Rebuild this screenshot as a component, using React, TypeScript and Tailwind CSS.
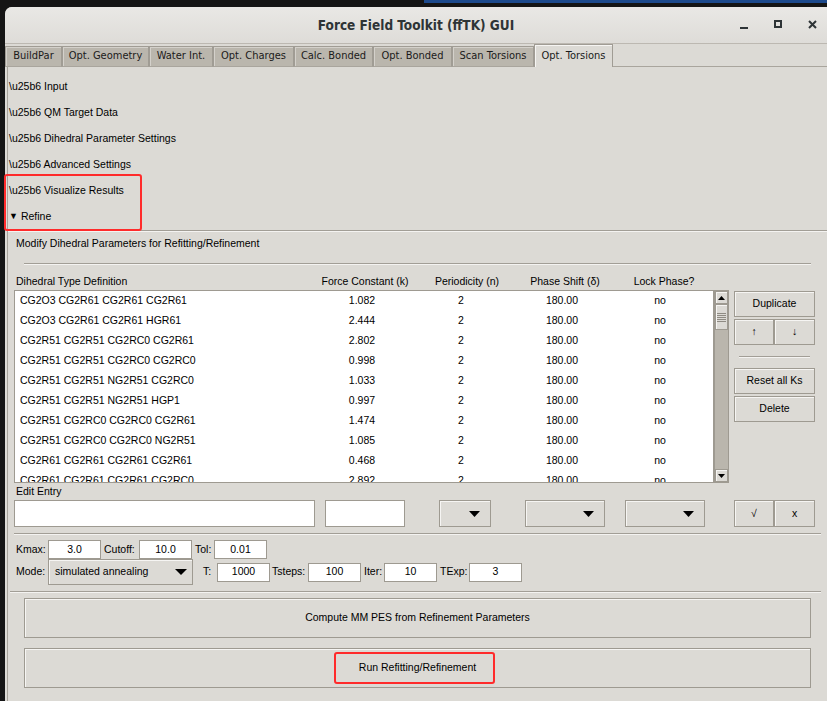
import React from 'react';

const rows: [string, string][] = [
  ['CG2O3 CG2R61 CG2R61 CG2R61', '1.082'],
  ['CG2O3 CG2R61 CG2R61 HGR61', '2.444'],
  ['CG2R51 CG2R51 CG2RC0 CG2R61', '2.802'],
  ['CG2R51 CG2R51 CG2RC0 CG2RC0', '0.998'],
  ['CG2R51 CG2R51 NG2R51 CG2RC0', '1.033'],
  ['CG2R51 CG2R51 NG2R51 HGP1', '0.997'],
  ['CG2R51 CG2RC0 CG2RC0 CG2R61', '1.474'],
  ['CG2R51 CG2RC0 CG2RC0 NG2R51', '1.085'],
  ['CG2R61 CG2R61 CG2R61 CG2R61', '0.468'],
  ['CG2R61 CG2R61 CG2R61 CG2RC0', '2.892'],
];

const tabs = [
  { label: 'BuildPar', w: 'w-[57px]' },
  { label: 'Opt. Geometry', w: 'w-[87px]' },
  { label: 'Water Int.', w: 'w-[64px]' },
  { label: 'Opt. Charges', w: 'w-[81px]' },
  { label: 'Calc. Bonded', w: 'w-[79px]' },
  { label: 'Opt. Bonded', w: 'w-[79px]' },
  { label: 'Scan Torsions', w: 'w-[82px]' },
];

const sections = [
  '\\u25b6 Input',
  '\\u25b6 QM Target Data',
  '\\u25b6 Dihedral Parameter Settings',
  '\\u25b6 Advanced Settings',
  '\\u25b6 Visualize Results',
];

const raised = 'border border-[#9e9a91] bg-[#dcdad5] shadow-[inset_1px_1px_0_#f6f5f3]';
const entry = 'border border-[#9e9a91] bg-white';

const Tri: React.FC<{ up?: boolean; w?: number; h?: number }> = ({ up, w = 11, h = 6 }) => (
  <svg width={w} height={h} viewBox={`0 0 ${w} ${h}`}>
    {up ? (
      <polygon points={`0,${h} ${w},${h} ${w / 2},0`} fill="#000" />
    ) : (
      <polygon points={`0,0 ${w},0 ${w / 2},${h}`} fill="#000" />
    )}
  </svg>
);

const Sep: React.FC<{ className?: string }> = ({ className = '' }) => (
  <div className={`h-[2px] border-t border-[#a29e96] bg-[#f4f3f1] ${className}`} />
);

const Field: React.FC<{ value: string; w?: string }> = ({ value, w = 'w-[53px]' }) => (
  <div className={`${entry} ${w} h-[19px] flex items-center justify-center shrink-0`}>{value}</div>
);

const Dropdown: React.FC<{ w: string; label?: string }> = ({ w, label }) => (
  <div className={`${raised} ${w} h-[27px] flex items-center pl-[6px] pr-[10px]`}>
    <span className="flex-1">{label}</span>
    <Tri />
  </div>
);

export default function App() {
  return (
    <div className="w-[827px] h-[701px] bg-[#151515] relative overflow-hidden font-['Liberation_Sans',Arial,sans-serif] text-[10.5px] text-black">
      {/* desktop strip */}
      <div className="h-[7px]">
        <div className="ml-[424px] h-[3px] bg-[#1d4a8c]" />
      </div>

      {/* window */}
      <div className="ml-[5px] h-[694px] bg-[#dcdad5] rounded-tl-[7px] flex flex-col">
        {/* title bar */}
        <div className="h-[37px] shrink-0 rounded-tl-[7px] bg-gradient-to-b from-[#e9e8e5] to-[#dedcd8] border-b border-[#bcb8b1] relative flex items-center justify-center">
          <span className="font-['DejaVu_Sans_Condensed','DejaVu_Sans',sans-serif] [font-stretch:condensed] font-bold text-[13.5px] text-[#2e3436]">
            Force Field Toolkit (ffTK) GUI
          </span>
          <div className="absolute right-[10px] top-[13px] flex items-start gap-[26px]">
            <div className="w-[8px] h-[2px] bg-[#2e3436] mt-[7px]" />
            <div className="w-[8px] h-[8px] border-2 border-[#2e3436]" />
            <svg width="9" height="9" viewBox="0 0 9 9">
              <path d="M1 1 L8 8 M8 1 L1 8" stroke="#2e3436" strokeWidth="2" />
            </svg>
          </div>
        </div>

        {/* tabs */}
        <div className="h-[23px] shrink-0 flex items-end font-['DejaVu_Sans_Condensed','DejaVu_Sans',sans-serif] [font-stretch:condensed] text-[11px] text-[#1a1a1a]">
          {tabs.map((t) => (
            <div
              key={t.label}
              className={`${t.w} h-[21px] bg-[#bab6ad] border border-[#a09c94] border-b-[#a9a59d] shadow-[inset_1px_1px_0_#d4d1cb] flex items-center justify-center shrink-0`}
            >
              {t.label}
            </div>
          ))}
          <div className="w-[79px] h-[23px] bg-[#dcdad5] border border-b-0 border-[#a09c94] shadow-[inset_1px_1px_0_#f6f5f3] flex items-center justify-center shrink-0">
            Opt. Torsions
          </div>
          <div className="flex-1 h-full border-b border-[#a9a59d]" />
        </div>

        {/* pane */}
        <div className="flex-1 ml-[2px] border-l border-[#a7a39b] flex flex-col relative">
          <div className="pt-[7px]">
            {sections.map((s) => (
              <div key={s} className="h-[26px] flex items-center pl-[1px]">
                {s}
              </div>
            ))}
            <div className="h-[26px] flex items-center pl-[1px]">
              <span className="text-[9px] mr-[3px]">▼</span>Refine
            </div>
          </div>
          <Sep />

          <div className="pl-[6px] pr-[12px]">
            <div className="h-[18px] mt-[3px] flex items-center pl-[2px]">
              Modify Dihedral Parameters for Refitting/Refinement
            </div>
            <Sep className="mt-[10px] ml-[10px] mr-[4px]" />

            {/* header */}
            <div className="h-[16px] mt-[9px] flex items-center">
              <div className="w-[306px] pl-[2px] shrink-0">Dihedral Type Definition</div>
              <div className="w-[90px] text-center shrink-0">Force Constant (k)</div>
              <div className="w-[80px] ml-[17px] text-center shrink-0">Periodicity (n)</div>
              <div className="w-[80px] ml-[18px] text-center shrink-0">Phase Shift (δ)</div>
              <div className="w-[80px] ml-[19px] text-center shrink-0">Lock Phase?</div>
            </div>

            {/* table + side buttons */}
            <div className="flex">
              <div className="w-[700px] h-[193px] bg-white border border-[#9e9a91] overflow-hidden shrink-0">
                {rows.map(([def, k]) => (
                  <div key={def} className="h-[20px] flex items-center">
                    <div className="w-[307px] pl-[5px] shrink-0">{def}</div>
                    <div className="w-[80px] text-center shrink-0">{k}</div>
                    <div className="w-[80px] ml-[19px] text-center shrink-0">2</div>
                    <div className="w-[80px] ml-[21px] text-center shrink-0">180.00</div>
                    <div className="w-[80px] ml-[18px] text-center shrink-0">no</div>
                  </div>
                ))}
              </div>
              {/* scrollbar */}
              <div className="w-[15px] h-[193px] bg-[#bab6ad] border border-[#9e9a91] flex flex-col shrink-0">
                <div className={`${raised} h-[13px] flex items-center justify-center`}>
                  <Tri up w={7} h={4} />
                </div>
                <div className={`${raised} h-[26px] flex flex-col items-center justify-center gap-[1px]`}>
                  {[0, 1, 2, 3, 4].map((i) => (
                    <div key={i} className="w-[9px] h-px bg-[#8f8b83]" />
                  ))}
                </div>
                <div className="flex-1" />
                <div className={`${raised} h-[13px] flex items-center justify-center`}>
                  <Tri w={7} h={4} />
                </div>
              </div>

              <div className="ml-[5px] w-[81px] flex flex-col pt-[1px]">
                <div className={`${raised} h-[26px] flex items-center justify-center`}>Duplicate</div>
                <div className="flex mt-[2px]">
                  <div className={`${raised} w-[40px] h-[26px] flex items-center justify-center`}>↑</div>
                  <div className={`${raised} w-[41px] h-[26px] flex items-center justify-center`}>↓</div>
                </div>
                <Sep className="mt-[11px] mx-[5px]" />
                <div className={`${raised} h-[26px] mt-[10px] flex items-center justify-center`}>Reset all Ks</div>
                <div className={`${raised} h-[26px] mt-[2px] flex items-center justify-center`}>Delete</div>
              </div>
            </div>

            {/* edit entry */}
            <div className="h-[17px] flex items-center pl-[2px] pt-[1px]">Edit Entry</div>
            <div className="flex items-start">
              <div className={`${entry} w-[301px] h-[27px] shrink-0`} />
              <div className={`${entry} w-[80px] h-[27px] ml-[10px] shrink-0`} />
              <div className="ml-[34px] shrink-0">
                <Dropdown w="w-[52px]" />
              </div>
              <div className="ml-[34px] shrink-0">
                <Dropdown w="w-[80px]" />
              </div>
              <div className="ml-[20px] shrink-0">
                <Dropdown w="w-[80px]" />
              </div>
              <div className={`${raised} w-[40px] h-[27px] ml-[29px] flex items-center justify-center shrink-0`}>√</div>
              <div className={`${raised} w-[41px] h-[27px] flex items-center justify-center shrink-0`}>x</div>
            </div>
          </div>

          <Sep className="mt-[6px] ml-[6px] mr-[6px]" />

          {/* optimization settings */}
          <div className="pl-[8px] mt-[5px]">
            <div className="flex items-center h-[19px]">
              <span className="w-[32px]">Kmax:</span>
              <Field value="3.0" />
              <span className="w-[38px] pl-[3px]">Cutoff:</span>
              <Field value="10.0" />
              <span className="w-[22px] pl-[3px]">Tol:</span>
              <Field value="0.01" />
            </div>
            <div className="flex items-center h-[26px]">
              <span className="w-[32px]">Mode:</span>
              <div className={`${raised} w-[145px] h-[26px] flex items-center pl-[6px] pr-[5px] shrink-0`}>
                <span className="flex-1">simulated annealing</span>
                <Tri w={12} h={6} />
              </div>
              <span className="w-[24px] pl-[10px]">T:</span>
              <Field value="1000" />
              <span className="w-[38px] pl-[2px]">Tsteps:</span>
              <Field value="100" />
              <span className="w-[23px] pl-[3px]">Iter:</span>
              <Field value="10" />
              <span className="w-[32px] pl-[3px]">TExp:</span>
              <Field value="3" />
            </div>
          </div>

          <Sep className="mt-[6px] ml-[2px] mr-[6px]" />

          <div className="pl-[16px] pr-[16px]">
            <div className={`${raised} h-[40px] mt-[5px] flex items-center justify-center`}>
              Compute MM PES from Refinement Parameters
            </div>
            <div className={`${raised} h-[40px] mt-[10px] flex items-center justify-center`}>
              Run Refitting/Refinement
            </div>
          </div>
        </div>
      </div>

      {/* annotation boxes */}
      <div className="absolute left-[4px] top-[174px] w-[138px] h-[57px] border-2 border-[#ff2b2b] rounded-[3px]" />
      <div className="absolute left-[334px] top-[652px] w-[161px] h-[32px] border-2 border-[#ff2b2b] rounded-[3px]" />
    </div>
  );
}
